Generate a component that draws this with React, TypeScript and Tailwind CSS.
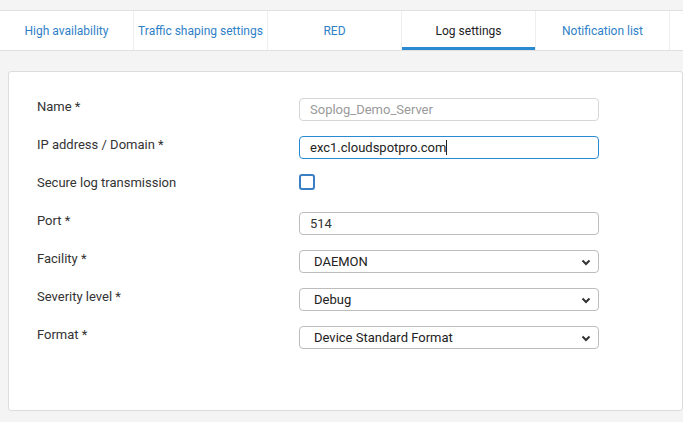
import React from "react";

const Chevron = () => (
  <svg width="12" height="12" viewBox="0 0 12 12" className="absolute right-[6px] top-[5px]">
    <path d="M2.5 4.5 L6 8 L9.5 4.5" fill="none" stroke="#333" strokeWidth="2" />
  </svg>
);

export default function App() {
  const tabs = ["High availability", "Traffic shaping settings", "RED", "Log settings", "Notification list"];
  const rows: [string, React.ReactNode][] = [
    ["Name *", <div className="h-[23px] w-[300px] rounded-[4px] border border-[#d6d6d6] px-[10px] text-[13px] leading-[21px] text-[#9a9a9a]">Soplog_Demo_Server</div>],
    ["IP address / Domain *", <div className="h-[23px] w-[300px] rounded-[4px] border border-[#2a8ad1] px-[10px] text-[13px] leading-[21px] text-[#222]">exc1.cloudspotpro.com<span className="inline-block h-[15px] w-px translate-y-[3px] bg-[#222]" /></div>],
    ["Secure log transmission", <div className="h-[16px] w-[16px] rounded-[3px] border-2 border-[#3a7fc4]" />],
    ["Port *", <div className="h-[23px] w-[300px] rounded-[4px] border border-[#bdbdbd] px-[10px] text-[13px] leading-[21px] text-[#333]">514</div>],
    ["Facility *", <div className="relative h-[23px] w-[300px] rounded-[4px] border border-[#bdbdbd] px-[14px] text-[13px] leading-[21px] text-[#222]">DAEMON<Chevron /></div>],
    ["Severity level *", <div className="relative h-[23px] w-[300px] rounded-[4px] border border-[#bdbdbd] px-[14px] text-[13px] leading-[21px] text-[#222]">Debug<Chevron /></div>],
    ["Format *", <div className="relative h-[23px] w-[300px] rounded-[4px] border border-[#bdbdbd] px-[14px] text-[13px] leading-[21px] text-[#222]">Device Standard Format<Chevron /></div>],
  ];
  return (
    <div className="h-[422px] w-[683px] overflow-hidden bg-[#f4f4f4] font-[Roboto,sans-serif]">
      <div className="mt-[10px] flex h-[41px] border-y border-[#e0e0e0] bg-white">
        {tabs.map((t, i) => (
          <div
            key={t}
            className={`relative flex w-[134px] shrink-0 items-center justify-center border-r border-[#eeeeee] text-[12px] ${i === 3 ? "text-[#222]" : "text-[#2f7fc7]"}`}
          >
            {t}
            {i === 3 && <div className="absolute bottom-0 left-0 right-0 h-[3px] bg-[#2a8ad1]" />}
          </div>
        ))}
      </div>
      <div className="ml-[8px] mt-[20px] h-[340px] rounded-[3px] border border-[#dcdcdc] bg-white pt-[26px]">
        {rows.map(([l, c]) => (
          <div key={l} className="flex h-[38px] items-start">
            <div className="w-[290px] pl-[28px] text-[13px] leading-[18px] text-[#333]">{l}</div>
            <div>{c}</div>
          </div>
        ))}
      </div>
    </div>
  );
}
